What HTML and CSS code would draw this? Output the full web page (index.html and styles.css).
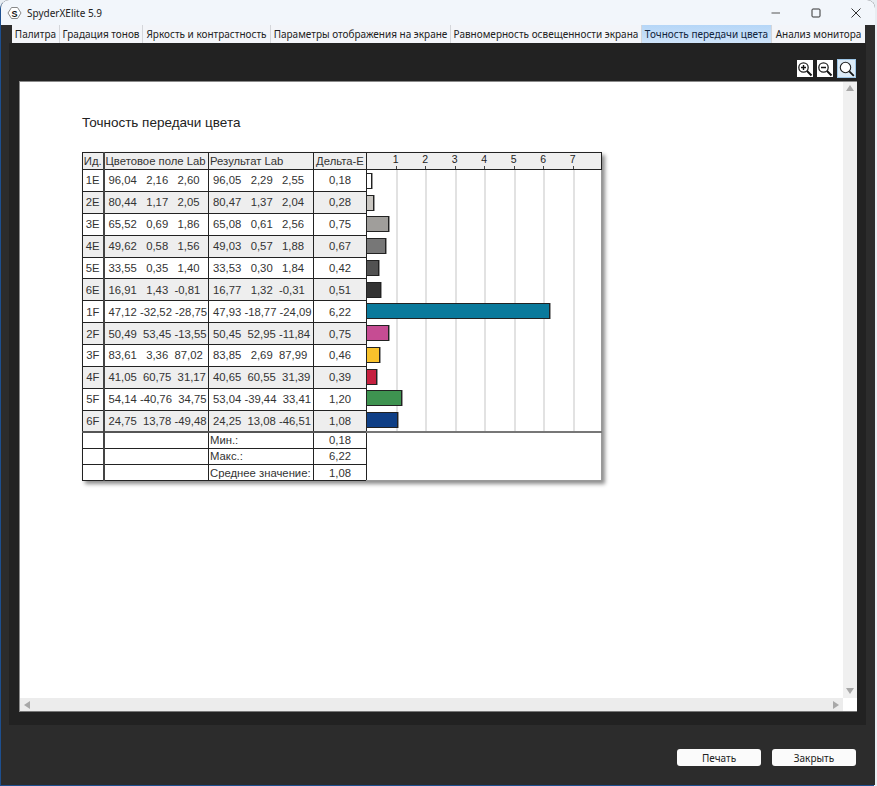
FILE: index.html
```html
<!DOCTYPE html>
<html lang="ru">
<head>
<meta charset="utf-8">
<title>SpyderXElite 5.9</title>
<link rel="stylesheet" href="styles.css">
</head>
<body>
<div class="window">
  <header class="titlebar">
    <svg class="logo" width="15" height="14" viewBox="0 0 15 14"><path d="M4.5 1.5h6L14 7l-3.5 5.5h-6L1 7z" fill="#fff" stroke="#888" stroke-width="1"/><text x="7.5" y="10.5" text-anchor="middle" class="logo-s">S</text></svg>
    <span class="title">SpyderXElite 5.9</span>
    <div class="controls">
      <svg width="10" height="10" viewBox="0 0 10 10"><path d="M0.5 5h8.5" stroke="#555" stroke-width="1.2"/></svg>
      <svg width="10" height="10" viewBox="0 0 10 10"><rect x="1" y="1" width="8" height="8" rx="1" fill="none" stroke="#333" stroke-width="1"/></svg>
      <svg width="10" height="10" viewBox="0 0 10 10"><path d="M0.5 0.5l9 9M9.5 0.5l-9 9" stroke="#333" stroke-width="1"/></svg>
    </div>
  </header>
  <nav class="tabs">
    <span class="tab t1">Палитра</span>
    <span class="tab t2">Градация тонов</span>
    <span class="tab t3">Яркость и контрастность</span>
    <span class="tab t4">Параметры отображения на экране</span>
    <span class="tab t5">Равномерность освещенности экрана</span>
    <span class="tab t6 active">Точность передачи цвета</span>
    <span class="tab t7">Анализ монитора</span>
  </nav>
  <main class="panel">
    <div class="toolbar">
      <button class="zoom"><svg width="16" height="16" viewBox="0 0 16 16"><circle cx="6.5" cy="6.5" r="4.7" fill="#fff" stroke="#222" stroke-width="1.3"/><path d="M10 10l4.5 4.5" stroke="#111" stroke-width="2"/><path d="M4 6.5h5M6.5 4v5" stroke="#111" stroke-width="1.4"/></svg></button>
      <button class="zoom"><svg width="16" height="16" viewBox="0 0 16 16"><circle cx="6.5" cy="6.5" r="4.7" fill="#fff" stroke="#222" stroke-width="1.3"/><path d="M10 10l4.5 4.5" stroke="#111" stroke-width="2"/><path d="M4 6.5h5" stroke="#111" stroke-width="1.4"/></svg></button>
      <button class="zoom on"><svg width="16" height="16" viewBox="0 0 16 16"><circle cx="6.5" cy="6.5" r="5.2" fill="#fff" stroke="#222" stroke-width="1.1"/><path d="M10.3 10.3l4.5 4.5" stroke="#111" stroke-width="1.8"/></svg></button>
    </div>
    <section class="viewport">
      <div class="upper">
        <div class="page">
          <h1 class="heading">Точность передачи цвета</h1>
          <table class="report">
            <thead>
              <tr>
                <th class="c-id">Ид.</th><th class="c-lab">Цветовое поле Lab</th><th class="c-lab">Результат Lab</th><th class="c-de">Дельта-E</th>
                <th class="c-chart"><div class="scale"><span>1</span><span>2</span><span>3</span><span>4</span><span>5</span><span>6</span><span>7</span></div></th>
              </tr>
            </thead>
            <tbody class="data">
              <tr><td class="c-id">1E</td><td class="num">96,04   2,16   2,60</td><td class="num">96,05   2,29   2,55</td><td class="c-de">0,18</td>
                <td class="chart" rowspan="12"><div class="bars">
                  <div class="bar-row"><i class="bar b1" style="width:5px"></i></div>
                  <div class="bar-row"><i class="bar b2" style="width:7px"></i></div>
                  <div class="bar-row"><i class="bar b3" style="width:22px"></i></div>
                  <div class="bar-row"><i class="bar b4" style="width:19px"></i></div>
                  <div class="bar-row"><i class="bar b5" style="width:12px"></i></div>
                  <div class="bar-row"><i class="bar b6" style="width:14px"></i></div>
                  <div class="bar-row"><i class="bar b7" style="width:183px"></i></div>
                  <div class="bar-row"><i class="bar b8" style="width:22px"></i></div>
                  <div class="bar-row"><i class="bar b9" style="width:13px"></i></div>
                  <div class="bar-row"><i class="bar b10" style="width:10px"></i></div>
                  <div class="bar-row"><i class="bar b11" style="width:35px"></i></div>
                  <div class="bar-row"><i class="bar b12" style="width:31px"></i></div>
                </div></td></tr>
              <tr><td class="c-id">2E</td><td class="num">80,44   1,17   2,05</td><td class="num">80,47   1,37   2,04</td><td class="c-de">0,28</td></tr>
              <tr><td class="c-id">3E</td><td class="num">65,52   0,69   1,86</td><td class="num">65,08   0,61   2,56</td><td class="c-de">0,75</td></tr>
              <tr><td class="c-id">4E</td><td class="num">49,62   0,58   1,56</td><td class="num">49,03   0,57   1,88</td><td class="c-de">0,67</td></tr>
              <tr><td class="c-id">5E</td><td class="num">33,55   0,35   1,40</td><td class="num">33,53   0,30   1,84</td><td class="c-de">0,42</td></tr>
              <tr><td class="c-id">6E</td><td class="num">16,91   1,43  -0,81</td><td class="num">16,77   1,32  -0,31</td><td class="c-de">0,51</td></tr>
              <tr><td class="c-id">1F</td><td class="num">47,12 -32,52 -28,75</td><td class="num">47,93 -18,77 -24,09</td><td class="c-de">6,22</td></tr>
              <tr><td class="c-id">2F</td><td class="num">50,49  53,45 -13,55</td><td class="num">50,45  52,95 -11,84</td><td class="c-de">0,75</td></tr>
              <tr><td class="c-id">3F</td><td class="num">83,61   3,36  87,02</td><td class="num">83,85   2,69  87,99</td><td class="c-de">0,46</td></tr>
              <tr><td class="c-id">4F</td><td class="num">41,05  60,75  31,17</td><td class="num">40,65  60,55  31,39</td><td class="c-de">0,39</td></tr>
              <tr><td class="c-id">5F</td><td class="num">54,14 -40,76  34,75</td><td class="num">53,04 -39,44  33,41</td><td class="c-de">1,20</td></tr>
              <tr><td class="c-id">6F</td><td class="num">24,75  13,78 -49,48</td><td class="num">24,25  13,08 -46,51</td><td class="c-de">1,08</td></tr>
            </tbody>
            <tbody class="summary">
              <tr><td class="c-id"></td><td></td><td class="lbl">Мин.:</td><td class="c-de">0,18</td><td class="blank" rowspan="3"></td></tr>
              <tr><td class="c-id"></td><td></td><td class="lbl">Макс.:</td><td class="c-de">6,22</td></tr>
              <tr><td class="c-id"></td><td></td><td class="lbl">Среднее значение:</td><td class="c-de">1,08</td></tr>
            </tbody>
          </table>
        </div>
        <div class="vscroll"><i class="arrow up"></i><i class="arrow down"></i></div>
      </div>
      <div class="lower">
        <div class="hscroll"><i class="arrow left"></i><i class="arrow right"></i></div>
        <div class="corner"></div>
      </div>
    </section>
  </main>
  <footer class="footer">
    <button class="btn">Печать</button>
    <button class="btn">Закрыть</button>
  </footer>
</div>
</body>
</html>
```
FILE: styles.css
```css
* { box-sizing: border-box; }
html, body { margin: 0; padding: 0; height: 100%; overflow: hidden; }
body { background: #e8edf2; }
.window {
  position: relative;
  width: 874px;
  height: 785px;
  margin-left: 1px;
  background: #2c2c2c;
  display: flex;
  flex-direction: column;
  border-radius: 8px 8px 0 0;
  overflow: hidden;
  box-shadow: -1px 1px 0 #1d4f8f;
}
.titlebar {
  height: 25px;
  flex: none;
  background: #f2f6fb;
  display: flex;
  align-items: center;
  padding-left: 6px;
  font: 10px "Noto Sans", sans-serif;
  color: #222;
}
.logo { flex: none; }
.logo-s { font: bold 9px "Liberation Sans", sans-serif; fill: #111; }
.title { margin-left: 5px; }
.controls {
  margin-left: auto;
  display: flex;
  gap: 30px;
  padding-right: 14px;
}
.tabs {
  height: 18px;
  flex: none;
  margin: 0 10px 0 11px;
  background: #f3f5f9;
  display: flex;
  font: 10px "Noto Sans", sans-serif;
  color: #222;
}
.tab {
  display: flex;
  align-items: center;
  justify-content: center;
  border-right: 1px solid #d4d6da;
  white-space: nowrap;
}
.t1 { width: 48px; }
.t2 { width: 83px; }
.t3 { width: 128px; }
.t4 { width: 180px; }
.t5 { width: 191px; }
.t6 { width: 130px; }
.t7 { flex: 1; border-right: 0; }
.tab.active { background: linear-gradient(#b5d6f7, #cfe4fa); color: #10243c; }
.panel {
  height: 682px;
  flex: none;
  margin: 0 9px 0 8px;
  background: #222;
  padding: 0 9px 13px 10px;
  display: flex;
  flex-direction: column;
}
.toolbar {
  height: 38px;
  flex: none;
  display: flex;
  justify-content: flex-end;
  align-items: flex-end;
  gap: 4px;
  padding: 0 1px 3px 0;
}
.zoom {
  width: 16px;
  height: 17px;
  padding: 0;
  margin: 0 0 1px;
  border: 0;
  background: #fff;
  display: flex;
  align-items: center;
  justify-content: center;
}
.zoom.on {
  width: 19px;
  height: 19px;
  margin: 0;
  background: #dcebf7;
  border: 1px solid #9cc5e6;
}
.viewport {
  flex: 1;
  min-height: 0;
  background: #fff;
  border-top: 1px solid #8a8a8a;
  border-left: 1px solid #8a8a8a;
  display: flex;
  flex-direction: column;
}
.upper { flex: 1; min-height: 0; display: flex; }
.page { flex: 1; min-width: 0; padding: 32px 0 0 62px; }
.heading {
  margin: 0 0 20px;
  height: 18px;
  font: 400 13.5px/18px "Liberation Sans", sans-serif;
  color: #222;
}
.report {
  border-collapse: collapse;
  table-layout: fixed;
  width: 519px;
  font: 11.3px "Liberation Sans", sans-serif;
  color: #333;
  box-shadow: 3px 3px 4px #8d8d8d;
  background: #fff;
}
.report th, .report td {
  border: 1px solid #222;
  padding: 0;
  overflow: hidden;
  white-space: pre;
}
.report th {
  height: 17px;
  background: #eeeeee;
  font-weight: 400;
  text-align: left;
  padding-left: 1px;
}
.report .c-id { width: 21px; text-align: center; padding: 0; border-right: 2px solid #444; }
.report .c-lab { width: 105px; }
.report .c-de { width: 53px; text-align: center; padding: 0; }
.report .c-chart { width: 235px; padding: 0; border-left: 1px solid #222; }
.data tr { height: 21.8px; }
.data tr:nth-child(even) td:not(.chart) { background: #eeeeee; }
.data .num { padding-left: 4px; }
.report .chart {
  padding: 0;
  border-bottom: 2px solid #777;
  border-right: 1px solid #999;
  background-color: #fff;
  background-image: repeating-linear-gradient(90deg, transparent 0, transparent 28.5px, #c4c4c4 28.5px, #c4c4c4 29.5px);
  vertical-align: top;
}
.summary tr { height: 16.3px; }
.summary tr:first-child td { border-top: 2px solid #555; }
.summary .lbl { padding-left: 1px; }
.report .blank { border-right: 1px solid #999; border-bottom: 1px solid #999; }
.scale {
  height: 16px;
  padding-left: 14px;
  display: flex;
  background-image: repeating-linear-gradient(90deg, transparent 0, transparent 28.5px, #444 28.5px, #444 29.5px);
  background-size: 100% 3px;
  background-position: 0 100%;
  background-repeat: no-repeat;
}
.scale span { width: 29.5px; text-align: center; font-size: 10.5px; line-height: 13px; color: #222; }
.bars { height: 261px; display: flex; flex-direction: column; }
.bar-row { flex: 1; display: flex; align-items: center; }
.bar { display: block; height: 16px; border: 1px solid #222; border-left: 0; box-shadow: 1px 0 0 #999; }
.b1 { background: #fff; }
.b2 { background: #c9c6c1; }
.b3 { background: #a09e9b; }
.b4 { background: #777; }
.b5 { background: #525252; }
.b6 { background: #333; }
.b7 { background: #0a7a9c; }
.b8 { background: #c64c93; }
.b9 { background: #f8c22c; }
.b10 { background: #c5203f; }
.b11 { background: #3e9350; }
.b12 { background: #0f3f86; }
.vscroll {
  position: relative;
  width: 14px;
  flex: none;
  background: #f0f0f0;
}
.lower { height: 14px; flex: none; display: flex; border-bottom: 1px solid #777; }
.hscroll { position: relative; flex: 1; background: #ececec; }
.corner { width: 14px; background: #fff; }
.arrow { position: absolute; width: 0; height: 0; border: 4px solid transparent; }
.arrow.up { left: 3px; top: 3px; border-bottom: 6px solid #a8a8a8; border-top: 0; }
.arrow.down { left: 3px; bottom: 4px; border-top: 6px solid #a8a8a8; border-bottom: 0; }
.arrow.left { left: 4px; top: 3px; border-right: 6px solid #a8a8a8; border-left: 0; }
.arrow.right { right: 4px; top: 3px; border-left: 6px solid #a8a8a8; border-right: 0; }
.footer {
  flex: 1;
  display: flex;
  justify-content: flex-end;
  align-items: flex-start;
  gap: 11px;
  padding: 24px 19px 0 0;
}
.btn {
  width: 84px;
  height: 17px;
  padding: 0;
  border: 0;
  border-radius: 3px;
  background: #fbfbfb;
  color: #222;
  font: 10px "Noto Sans", sans-serif;
}
```
